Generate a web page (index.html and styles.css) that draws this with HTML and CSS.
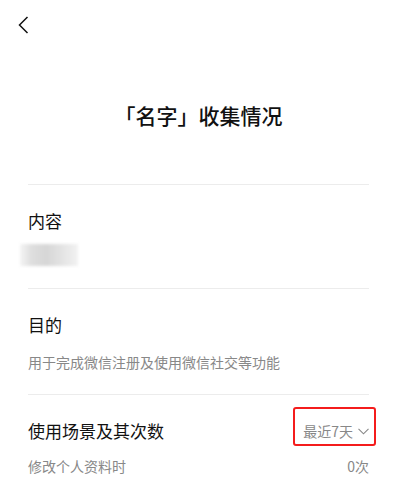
FILE: index.html
```html
<!DOCTYPE html>
<html lang="zh-CN">
<head>
    <meta charset="UTF-8">
    <meta name="viewport" content="width=device-width, initial-scale=1.0">
    <title>收集情况</title>
    <link rel="stylesheet" href="styles.css">
</head>
<body>
    <nav class="navbar">
        <svg class="back" width="11" height="18" viewBox="0 0 11 18">
            <path d="M9.5 1 L1.5 9 L9.5 17" fill="none" stroke="#111" stroke-width="1.5"/>
        </svg>
    </nav>
    <h1 class="title">「名字」收集情况</h1>
    <div class="content">
        <div class="section">
            <div class="label">内容</div>
            <div class="masked"></div>
        </div>
        <div class="section">
            <div class="label">目的</div>
            <div class="desc">用于完成微信注册及使用微信社交等功能</div>
        </div>
        <div class="section last">
            <div class="row">
                <div class="label">使用场景及其次数</div>
                <div class="picker">
                    最近7天
                    <svg width="11" height="7" viewBox="0 0 11 7">
                        <path d="M0.5 0.8 L5.5 5.8 L10.5 0.8" fill="none" stroke="#888" stroke-width="1.1"/>
                    </svg>
                </div>
            </div>
            <div class="row item">
                <span>修改个人资料时</span>
                <span>0次</span>
            </div>
        </div>
    </div>
</body>
</html>
```

FILE: styles.css
```css
body {
    font-family: "Noto Sans CJK SC", "Noto Sans", sans-serif;
    margin: 0;
    padding: 0;
    background-color: #fff;
    color: #111;
}
.navbar {
    height: 50px;
    padding-left: 18px;
    display: flex;
    align-items: flex-start;
}
.back {
    margin-top: 16px;
}
.title {
    margin: 51px 0 0;
    font-size: 21px;
    line-height: 29px;
    font-weight: 500;
    text-align: center;
}
.content {
    padding: 0 28px;
    margin-top: 54px;
}
.section {
    border-top: 1px solid #ececec;
    padding: 24px 0 22px;
}
.label {
    font-size: 17px;
    line-height: 24px;
}
.masked {
    width: 58px;
    height: 22px;
    margin: 11px 0 0 -8px;
    background: linear-gradient(90deg, #f4f4f4 0%, #dedede 20%, #d6d6d6 45%, #e2e2e2 70%, #f2f2f2 100%);
    filter: blur(1.5px);
}
.desc {
    margin-top: 15px;
    font-size: 14px;
    line-height: 20px;
    color: #888;
}
.row {
    display: flex;
    justify-content: space-between;
    align-items: center;
}
.picker {
    position: relative;
    font-size: 14px;
    line-height: 20px;
    color: #888;
    display: flex;
    align-items: center;
    gap: 5px;
}
.picker::after {
    content: "";
    position: absolute;
    left: -10px;
    right: -7px;
    top: -14px;
    bottom: -5px;
    border: 2px solid #f41c1c;
    border-radius: 3px;
}
.item {
    margin-top: 13px;
    font-size: 14px;
    line-height: 20px;
    color: #888;
}
```
